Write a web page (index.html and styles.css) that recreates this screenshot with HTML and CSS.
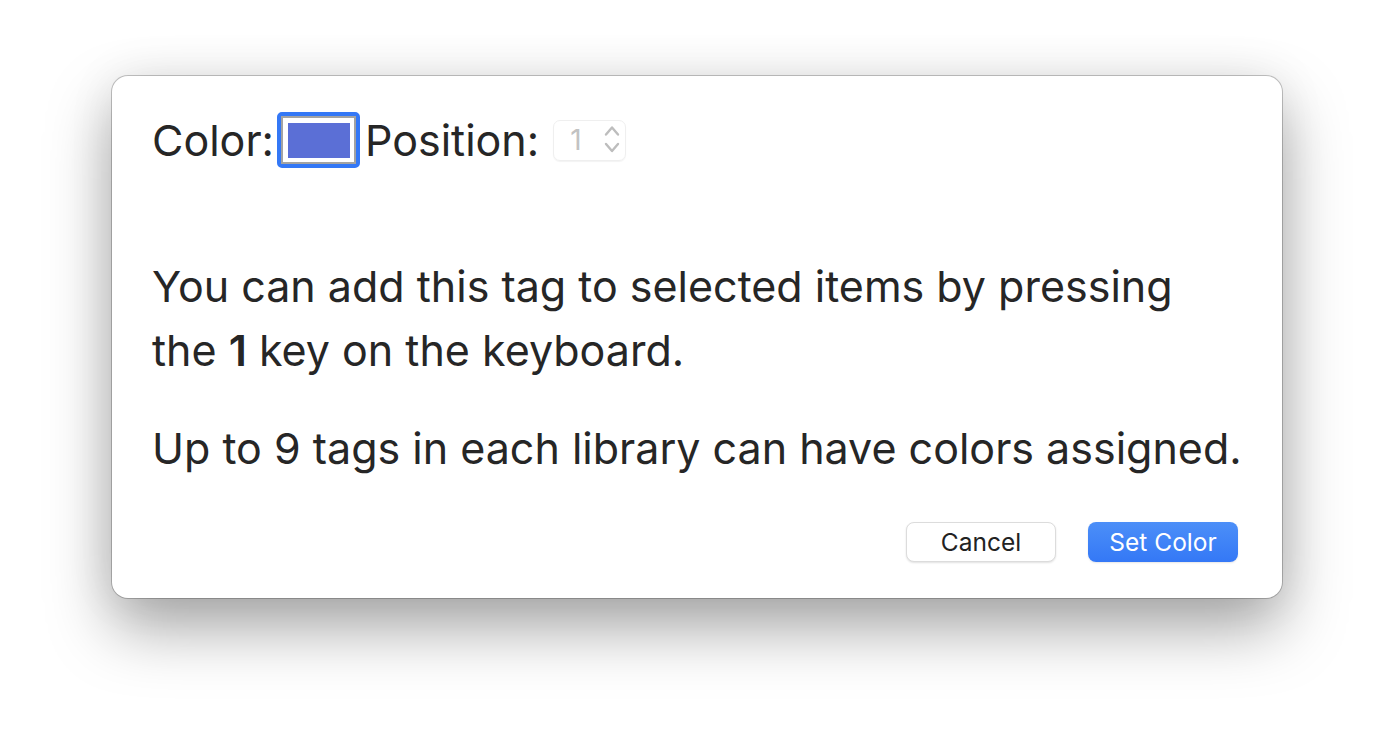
FILE: index.html
```html
<!DOCTYPE html>
<html>
<head>
<meta charset="utf-8">
<link rel="stylesheet" href="styles.css">
</head>
<body>
<div class="stage">
  <div class="dialog">
    <div class="top-row">
      <span class="label">Color:</span>
      <span class="well"><span class="well-inner"><span class="swatch"></span></span></span>
      <span class="label">Position:</span>
      <span class="stepper">
        <span class="step-value">1</span>
        <svg class="step-arrows" width="16" height="30" viewBox="0 0 16 30">
          <path d="M2 9.5 L8 2.5 L14 9.5" fill="none" stroke="#bdbdbd" stroke-width="2.4" stroke-linecap="round" stroke-linejoin="round"/>
          <path d="M2 19 L8 26 L14 19" fill="none" stroke="#bdbdbd" stroke-width="2.4" stroke-linecap="round" stroke-linejoin="round"/>
        </svg>
      </span>
    </div>
    <div class="body">
      <p class="para para-narrow">You can add this tag to selected items by pressing the <b>1</b> key on the keyboard.</p>
      <p class="para">Up to 9 tags in each library can have colors assigned.</p>
    </div>
    <div class="buttons">
      <button class="btn btn-cancel">Cancel</button>
      <button class="btn btn-primary">Set Color</button>
    </div>
  </div>
</div>
</body>
</html>
```

FILE: styles.css
```css
html, body {
  margin: 0;
  padding: 0;
  background: #ffffff;
}
body {
  font-family: Inter, "Noto Sans", "Liberation Sans", sans-serif;
  color: #262626;
}
.stage {
  width: 1394px;
  height: 746px;
  padding-top: 76px;
  padding-left: 112px;
  box-sizing: border-box;
}
.dialog {
  width: 1170px;
  height: 522px;
  box-sizing: border-box;
  background: #ffffff;
  border-radius: 16px;
  box-shadow: 0 0 0 1px rgba(0,0,0,0.22), 0 30px 64px rgba(0,0,0,0.35), 0 0 50px rgba(0,0,0,0.07);
  padding: 36px 28px 36px 40px;
  display: flex;
  flex-direction: column;
}
.top-row {
  display: flex;
  align-items: center;
  height: 56px;
}
.label {
  font-size: 43px;
}
.well {
  width: 83px;
  height: 56px;
  box-sizing: border-box;
  border: 4px solid #3478f6;
  border-radius: 5px;
  margin: 0 5px 0 3px;
  display: flex;
}
.well-inner {
  flex: 1;
  border: 2px solid #a3a3a3;
  background: #fff;
  padding: 5px 4px 4px 5px;
  display: flex;
}
.swatch {
  flex: 1;
  background: #5b6fd6;
}
.stepper {
  margin-left: 14px;
  width: 73px;
  height: 41px;
  box-sizing: border-box;
  border-radius: 7px;
  border: 1px solid #efefef;
  box-shadow: 0 1px 1px rgba(0,0,0,0.05);
  display: flex;
  align-items: center;
  padding-left: 16px;
  gap: 22px;
}
.step-value {
  font-size: 28px;
  color: #c2c2c2;
}
.body {
  margin-top: 86px;
  flex: 1;
}
.para {
  margin: 0 0 34px 0;
  font-size: 43px;
  line-height: 64px;
}
.para-narrow {
  max-width: 1060px;
}
.para b {
  font-weight: 600;
}
.buttons {
  display: flex;
  justify-content: flex-end;
  gap: 32px;
  padding-right: 16px;
}
.btn {
  width: 150px;
  height: 40px;
  border-radius: 8px;
  font-family: Inter, "Noto Sans", "Liberation Sans", sans-serif;
  font-size: 24.5px;
  padding: 0;
}
.btn-cancel {
  background: #ffffff;
  color: #222222;
  border: 1px solid #dcdcdc;
  box-shadow: 0 1px 2px rgba(0,0,0,0.12);
}
.btn-primary {
  background: linear-gradient(#4c8ff8, #3478f6);
  color: #ffffff;
  border: none;
  box-shadow: 0 1px 2px rgba(0,0,0,0.1);
}
```
